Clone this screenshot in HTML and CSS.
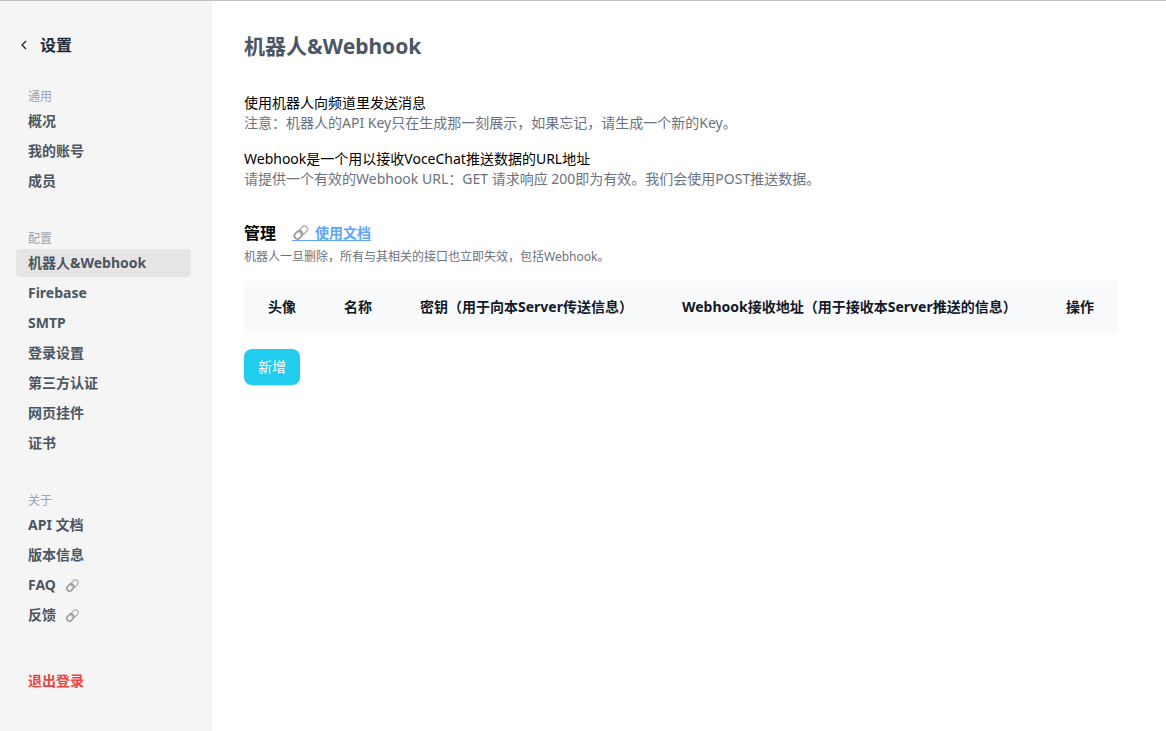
FILE: index.html
```html
<!DOCTYPE html>
<html lang="zh-CN">
<head>
<meta charset="utf-8">
<title>机器人&amp;Webhook</title>
<link rel="stylesheet" href="styles.css">
</head>
<body>
<svg class="defs" aria-hidden="true">
  <symbol id="link" viewBox="0 0 16 16">
    <g fill="none" stroke-width="1.9">
      <rect x="6" y="2.2" width="9.4" height="6.6" rx="3.3" transform="rotate(-48 10.7 5.5)" stroke="#bcbcbc"/>
      <rect x="0.6" y="7.2" width="9.4" height="6.6" rx="3.3" transform="rotate(-48 5.3 10.5)" stroke="#9a9a9a"/>
    </g>
  </symbol>
</svg>
<div class="app">
  <aside class="sidebar">
    <button class="back" type="button">
      <svg class="chevron" viewBox="0 0 16 16" aria-hidden="true"><path d="M10 4 L6 8 L10 12" fill="none" stroke="#222" stroke-width="1.3"/></svg>
      设置
    </button>
    <nav class="nav">
      <section class="group">
        <h2 class="label">通用</h2>
        <a class="item" href="#overview">概况</a>
        <a class="item" href="#account">我的账号</a>
        <a class="item" href="#members">成员</a>
      </section>
      <section class="group">
        <h2 class="label">配置</h2>
        <a class="item active" href="#bot">机器人&amp;Webhook</a>
        <a class="item" href="#firebase">Firebase</a>
        <a class="item" href="#smtp">SMTP</a>
        <a class="item" href="#login">登录设置</a>
        <a class="item" href="#third">第三方认证</a>
        <a class="item" href="#widget">网页挂件</a>
        <a class="item" href="#license">证书</a>
      </section>
      <section class="group">
        <h2 class="label">关于</h2>
        <a class="item" href="#api">API 文档</a>
        <a class="item" href="#version">版本信息</a>
        <a class="item" href="#faq">FAQ <svg class="mark" aria-hidden="true"><use href="#link"/></svg></a>
        <a class="item" href="#feedback">反馈 <svg class="mark" aria-hidden="true"><use href="#link"/></svg></a>
      </section>
    </nav>
    <button class="item logout" type="button">退出登录</button>
  </aside>
  <main class="main">
    <h1 class="title">机器人&amp;Webhook</h1>
    <div class="notes">
      <div>
        <p class="lead">使用机器人向频道里发送消息</p>
        <p class="hint">注意：机器人的API Key只在生成那一刻展示，如果忘记，请生成一个新的Key。</p>
      </div>
      <div>
        <p class="lead">Webhook是一个用以接收VoceChat推送数据的URL地址</p>
        <p class="hint">请提供一个有效的Webhook URL：GET 请求响应 200即为有效。我们会使用POST推送数据。</p>
      </div>
    </div>
    <div class="manage">
      <h2 class="subtitle">管理</h2>
      <a class="docs" href="#docs"><svg class="docs-icon" aria-hidden="true"><use href="#link"/></svg>使用文档</a>
    </div>
    <p class="warning">机器人一旦删除，所有与其相关的接口也立即失效，包括Webhook。</p>
    <table class="bots">
      <thead>
        <tr>
          <th class="short" scope="col">头像</th>
          <th class="short" scope="col">名称</th>
          <th class="key" scope="col">密钥（用于向本Server传送信息）</th>
          <th scope="col">Webhook接收地址（用于接收本Server推送的信息）</th>
          <th class="short" scope="col">操作</th>
        </tr>
      </thead>
    </table>
    <button class="add" type="button">新增</button>
  </main>
</div>
</body>
</html>
```
FILE: styles.css
```css
* {
  box-sizing: border-box;
}

body {
  margin: 0;
  font-family: "Noto Sans", "Noto Sans CJK SC", sans-serif;
  font-size: 14px;
  line-height: 20px;
  color: #000;
  background: #fff;
}

h1, h2, p {
  margin: 0;
}

button {
  border: 0;
  background: none;
  font: inherit;
  text-align: left;
  cursor: pointer;
}

.defs {
  display: none;
}

.app {
  display: flex;
  min-height: 100vh;
  border-top: 1px solid #c0c0c0;
}

.sidebar {
  flex: none;
  width: 212px;
  padding: 32px 21px 32px 16px;
  background: #f5f5f5;
}

.back {
  display: flex;
  align-items: center;
  gap: 8px;
  padding: 0;
  font-size: 16px;
  font-weight: 600;
  line-height: 24px;
  color: #1f2937;
}

.chevron {
  width: 16px;
  height: 16px;
}

.nav {
  display: flex;
  flex-direction: column;
  gap: 36px;
  margin: 32px 0 38px;
}

.group {
  display: flex;
  flex-direction: column;
  gap: 2px;
}

.label {
  padding: 0 12px;
  font-size: 12px;
  font-weight: 400;
  line-height: 16px;
  color: #9ca3af;
}

.item {
  display: flex;
  align-items: center;
  gap: 10px;
  width: 100%;
  padding: 4px 12px;
  border-radius: 4px;
  font-weight: 700;
  color: #4b5563;
  text-decoration: none;
}

.active {
  background: #e7e5e4;
}

.mark {
  width: 13px;
  height: 13px;
}

.logout {
  color: #ef4444;
}

.main {
  flex: 1;
  min-width: 0;
  padding: 30px 48px 32px 32px;
}

.title {
  font-size: 21px;
  font-weight: 700;
  line-height: 30px;
  color: #4b5563;
}

.notes {
  display: flex;
  flex-direction: column;
  gap: 16px;
  margin: 32px 0 32px;
}

.hint {
  color: #6b7280;
}

.manage {
  display: flex;
  align-items: center;
  gap: 16px;
}

.subtitle {
  font-size: 16px;
  font-weight: 700;
  line-height: 24px;
}

.docs {
  display: flex;
  align-items: center;
  gap: 6px;
  border-bottom: 1px solid #60a5fa;
  padding-left: 1px;
  font-weight: 700;
  line-height: 14px;
  color: #60a5fa;
  text-decoration: none;
}

.docs-icon {
  width: 16px;
  height: 15px;
}

.warning {
  margin: 4px 0 16px;
  font-size: 12px;
  line-height: 16px;
  color: #6b7280;
}

.bots {
  width: 100%;
  border-collapse: collapse;
  background: #f9fafb;
}

.bots th {
  padding: 16px 24px;
  font-weight: 700;
  text-align: left;
  white-space: nowrap;
  color: #111827;
}

.bots .short {
  width: 76px;
}

.bots .key {
  width: 262px;
}

.add {
  margin-top: 16px;
  padding: 8px 14px;
  border-radius: 8px;
  background: #22ccee;
  box-shadow: 0 1px 2px rgba(16, 24, 40, 0.12);
  color: #fff;
}
```
